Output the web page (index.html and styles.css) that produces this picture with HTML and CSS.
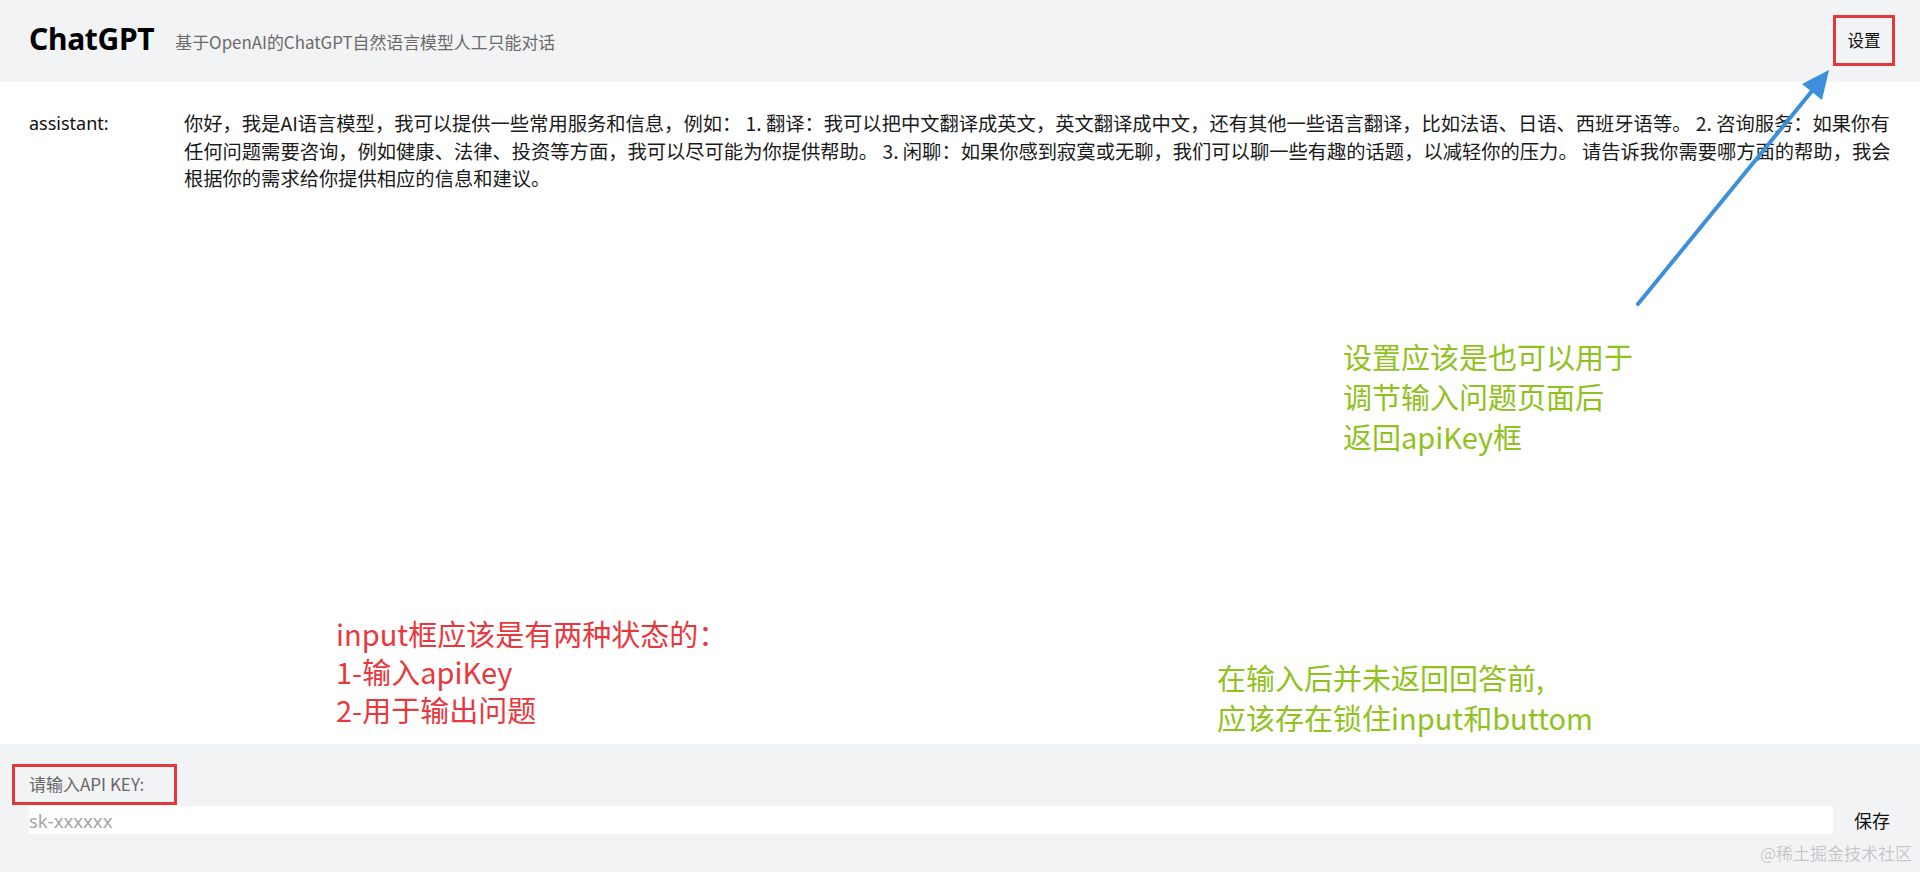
FILE: index.html
```html
<!DOCTYPE html>
<html lang="zh-CN">
<head>
<meta charset="utf-8">
<title>ChatGPT</title>
<link rel="stylesheet" href="styles.css">
</head>
<body>
<div class="app">
  <header class="header">
    <h1 class="title">ChatGPT</h1>
    <span class="subtitle">基于OpenAI的ChatGPT自然语言模型人工只能对话</span>
    <button class="settings mark-box">设置</button>
  </header>

  <main class="chat">
    <div class="message">
      <div class="role">assistant:</div>
      <div class="content">你好，我是AI语言模型，我可以提供一些常用服务和信息，例如： 1. 翻译：我可以把中文翻译成英文，英文翻译成中文，还有其他一些语言翻译，比如法语、日语、西班牙语等。 2. 咨询服务：如果你有任何问题需要咨询，例如健康、法律、投资等方面，我可以尽可能为你提供帮助。 3. 闲聊：如果你感到寂寞或无聊，我们可以聊一些有趣的话题，以减轻你的压力。 请告诉我你需要哪方面的帮助，我会根据你的需求给你提供相应的信息和建议。</div>
    </div>

    <div class="note note-green note-settings">设置应该是也可以用于<br>调节输入问题页面后<br>返回apiKey框</div>
    <div class="note note-red note-input">input框应该是有两种状态的：<br>1-输入apiKey<br>2-用于输出问题</div>
    <div class="note note-green note-lock">在输入后并未返回回答前,<br>应该存在锁住input和buttom</div>
  </main>

  <footer class="footer">
    <label class="key-label mark-box" for="apikey">请输入API KEY:</label>
    <div class="key-row">
      <input id="apikey" class="key-input" type="text" placeholder="sk-xxxxxx">
      <button class="save">保存</button>
    </div>
    <div class="watermark">@稀土掘金技术社区</div>
  </footer>

  <svg class="arrow" width="1920" height="872" viewBox="0 0 1920 872" aria-hidden="true">
    <line x1="1638" y1="304" x2="1812" y2="91" stroke="#3d8fdc" stroke-width="4" stroke-linecap="round"/>
    <polygon points="1829,70 1802,84 1822,100" fill="#3d8fdc"/>
  </svg>
</div>
</body>
</html>
```

FILE: styles.css
```css
* { box-sizing: border-box; }

html, body {
  margin: 0;
  padding: 0;
  background: #ffffff;
}

body {
  font-family: "Noto Sans", "Noto Sans CJK SC", sans-serif;
  color: #222;
}

.app {
  position: relative;
  width: 1920px;
  height: 872px;
  display: flex;
  flex-direction: column;
  overflow: hidden;
}

/* header */
.header {
  height: 82px;
  flex: none;
  background: #f2f3f5;
  display: flex;
  align-items: center;
  padding: 0 25px 0 29px;
}

.title {
  margin: 0;
  font-size: 30px;
  font-weight: 700;
  color: #000;
  letter-spacing: -0.3px;
  line-height: 1;
  padding-bottom: 4px;
}

.subtitle {
  margin-left: 21px;
  font-size: 16.9px;
  color: #6a6a6a;
  font-family: "Noto Sans CJK SC", "Noto Sans", sans-serif;
}

.settings {
  margin-left: auto;
  width: 62px;
  height: 51px;
  margin-top: -2px;
  background: transparent;
  border: none;
  font-family: "Noto Sans CJK SC", sans-serif;
  font-size: 16.5px;
  color: #111;
  padding: 0;
}

.mark-box {
  position: relative;
}

.mark-box::after {
  content: "";
  position: absolute;
  border: 3px solid #e3393c;
  pointer-events: none;
}

.settings::after {
  inset: 0;
}

/* chat */
.chat {
  position: relative;
  flex: 1;
  padding: 28px 29px 0 29px;
}

.message {
  display: flex;
}

.role {
  width: 155px;
  flex: none;
  font-size: 18px;
  line-height: 27.5px;
  color: #111;
}

.content {
  flex: 1;
  font-family: "Noto Sans CJK SC", sans-serif;
  font-size: 19.3px;
  line-height: 27.5px;
  color: #1a1a1a;
}

/* annotations */
.note {
  position: absolute;
  font-family: "Noto Sans CJK SC", sans-serif;
  white-space: nowrap;
  font-size: 29px;
}

.note-green { color: #8fc21d; }
.note-red { color: #e8383d; }

.note-settings {
  left: 1343px;
  top: 254px;
  line-height: 40px;
}

.note-input {
  left: 336px;
  top: 532px;
  line-height: 38px;
}

.note-lock {
  left: 1217px;
  top: 575px;
  line-height: 40px;
}

/* footer */
.footer {
  position: relative;
  height: 128px;
  flex: none;
  background: #f2f3f5;
  padding: 29px 27px 0 29px;
}

.key-label {
  display: inline-block;
  font-family: "Noto Sans CJK SC", sans-serif;
  font-size: 17px;
  line-height: 22px;
  color: #666;
}

.key-label::after {
  left: -17px;
  right: -33px;
  top: -9px;
  bottom: -10px;
}

.key-row {
  display: flex;
  align-items: center;
  margin-top: 10px;
}

.key-input {
  flex: 1;
  height: 28px;
  border: none;
  outline: none;
  background: #fff;
  padding: 0;
  font-family: "Noto Sans", "Noto Sans CJK SC", sans-serif;
  font-size: 18.5px;
  color: #333;
}

.key-input::placeholder {
  color: #a5a5a5;
}

.save {
  width: 60px;
  background: transparent;
  border: none;
  padding: 0 0 0 21px;
  text-align: left;
  font-family: "Noto Sans CJK SC", sans-serif;
  font-size: 18px;
  color: #111;
}

.watermark {
  position: absolute;
  right: 8px;
  bottom: 7px;
  font-family: "Noto Sans CJK SC", sans-serif;
  font-size: 17px;
  color: rgba(0, 0, 0, 0.2);
}

.arrow {
  position: absolute;
  left: 0;
  top: 0;
  pointer-events: none;
}
```
